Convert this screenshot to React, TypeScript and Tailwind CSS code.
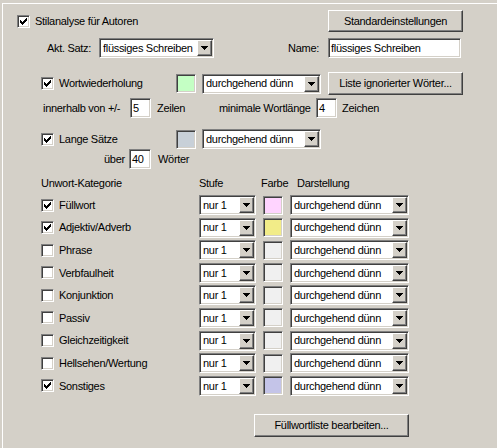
import type { ReactNode } from 'react';

const SUNKEN =
  'border border-t-[#808080] border-l-[#808080] border-r-white border-b-white shadow-[inset_1px_1px_0_#404040,inset_-1px_-1px_0_#d4d0c8]';
const RAISED =
  'border border-t-white border-l-white border-r-[#404040] border-b-[#404040] shadow-[inset_-1px_-1px_0_#808080]';

function Check({ checked, label }: { checked?: boolean; label: string }) {
  return (
    <div className="flex items-center">
      <div className={`flex h-[13px] w-[13px] items-center justify-center bg-white ${SUNKEN}`}>
        {checked && (
          <svg width="7" height="7" viewBox="0 0 7 7" shapeRendering="crispEdges">
            <path d="M0 2h1v1h1v1h1V3h1V2h1V1h1V0h1v3H6v1H5v1H4v1H3v1H2V6H1V5H0z" fill="#000" />
          </svg>
        )}
      </div>
      <span className="ml-[5px]">{label}</span>
    </div>
  );
}

function Select({ text, className }: { text: string; className: string }) {
  return (
    <div className={`flex h-[20px] bg-white p-px ${SUNKEN} ${className}`}>
      <span className="flex flex-1 items-center overflow-hidden whitespace-nowrap pl-[2px]">{text}</span>
      <div className={`flex w-[15px] items-center justify-center bg-[#d4d0c8] ${RAISED}`}>
        <svg width="7" height="4" viewBox="0 0 7 4" shapeRendering="crispEdges">
          <path d="M0 0h7L3.5 4z" fill="#000" />
        </svg>
      </div>
    </div>
  );
}

function Field({ value, className }: { value: string; className: string }) {
  return (
    <div className={`flex h-[20px] items-center bg-white pl-[2px] ${SUNKEN} ${className}`}>{value}</div>
  );
}

function Swatch({ color }: { color: string }) {
  return <div className={`h-[19px] w-[20px] ${SUNKEN} ${color}`} />;
}

function Button({ children, className }: { children: ReactNode; className: string }) {
  return (
    <div className={`flex items-center justify-center bg-[#d4d0c8] ${RAISED} ${className}`}>{children}</div>
  );
}

const rows = [
  { label: 'Füllwort', checked: true, color: 'bg-[#ffd4ff]' },
  { label: 'Adjektiv/Adverb', checked: true, color: 'bg-[#f2ec88]' },
  { label: 'Phrase', checked: false, color: 'bg-[#f0f0f0]' },
  { label: 'Verbfaulheit', checked: false, color: 'bg-[#f0f0f0]' },
  { label: 'Konjunktion', checked: false, color: 'bg-[#f0f0f0]' },
  { label: 'Passiv', checked: false, color: 'bg-[#f0f0f0]' },
  { label: 'Gleichzeitigkeit', checked: false, color: 'bg-[#f0f0f0]' },
  { label: 'Hellsehen/Wertung', checked: false, color: 'bg-[#f0f0f0]' },
  { label: 'Sonstiges', checked: true, color: 'bg-[#c4c4e8]' },
];

export default function App() {
  return (
    <div
      className="h-[448px] w-[497px] overflow-hidden bg-[#d4d0c8] pl-[2px] pt-[3px] text-[11px] tracking-[-0.3px] text-black"
      style={{ fontFamily: '"Liberation Sans", Arial, sans-serif' }}
    >
      <div className="flex h-full flex-col border-l border-t border-white">
        {/* header */}
        <div className="mt-[6px] flex h-[22px] items-center">
          <div className="ml-[14px] w-[311px]">
            <Check checked label="Stilanalyse für Autoren" />
          </div>
          <Button className="h-[22px] w-[135px]">Standardeinstellungen</Button>
        </div>

        <div className="mt-[6px] flex h-[20px] items-center">
          <span className="w-[88px] text-right">Akt. Satz:</span>
          <Select text="flüssiges Schreiben" className="ml-[8px] w-[115px]" />
          <span className="w-[105px] text-right">Name:</span>
          <Field value="flüssiges Schreiben" className="ml-[9px] w-[133px]" />
        </div>

        {/* Wortwiederholung */}
        <div className="mt-[14px] flex h-[23px] items-center">
          <div className="ml-[38px] w-[135px]">
            <Check checked label="Wortwiederholung" />
          </div>
          <Swatch color="bg-[#c4ffc4]" />
          <Select text="durchgehend dünn" className="ml-[6px] w-[119px]" />
          <Button className="ml-[7px] h-[23px] w-[135px]">Liste ignorierter Wörter...</Button>
        </div>

        <div className="mt-[3px] flex h-[20px] items-center">
          <span className="ml-[40px] w-[87px]">innerhalb von +/-</span>
          <Field value="5" className="w-[21px]" />
          <span className="ml-[6px] w-[62px]">Zeilen</span>
          <span className="w-[97px]">minimale Wortlänge</span>
          <Field value="4" className="w-[21px]" />
          <span className="ml-[5px]">Zeichen</span>
        </div>

        {/* Lange Sätze */}
        <div className="mt-[11px] flex h-[20px] items-center">
          <div className="ml-[38px] w-[135px]">
            <Check checked label="Lange Sätze" />
          </div>
          <Swatch color="bg-[#c8d0d8]" />
          <Select text="durchgehend dünn" className="ml-[6px] w-[119px]" />
        </div>

        <div className="flex h-[20px] items-center">
          <span className="ml-[101px] w-[25px]">über</span>
          <Field value="40" className="w-[22px]" />
          <span className="ml-[7px]">Wörter</span>
        </div>

        {/* Kategorien */}
        <div className="mt-[7px] flex h-[14px] items-center">
          <span className="ml-[38px] w-[158px]">Unwort-Kategorie</span>
          <span className="w-[62px]">Stufe</span>
          <span className="w-[36px]">Farbe</span>
          <span>Darstellung</span>
        </div>

        <div className="mt-[5px] flex flex-col gap-y-[2.6px]">
          {rows.map((r) => (
            <div key={r.label} className="flex h-[20px] items-center">
              <div className="ml-[38px] w-[158px]">
                <Check checked={r.checked} label={r.label} />
              </div>
              <Select text="nur 1" className="w-[57px]" />
              <div className="ml-[7px]">
                <Swatch color={r.color} />
              </div>
              <Select text="durchgehend dünn" className="ml-[7px] w-[119px]" />
            </div>
          ))}
        </div>

        <div className="mt-[18px] flex">
          <Button className="ml-[251px] h-[23px] w-[155px]">Füllwortliste bearbeiten...</Button>
        </div>
      </div>
    </div>
  );
}
